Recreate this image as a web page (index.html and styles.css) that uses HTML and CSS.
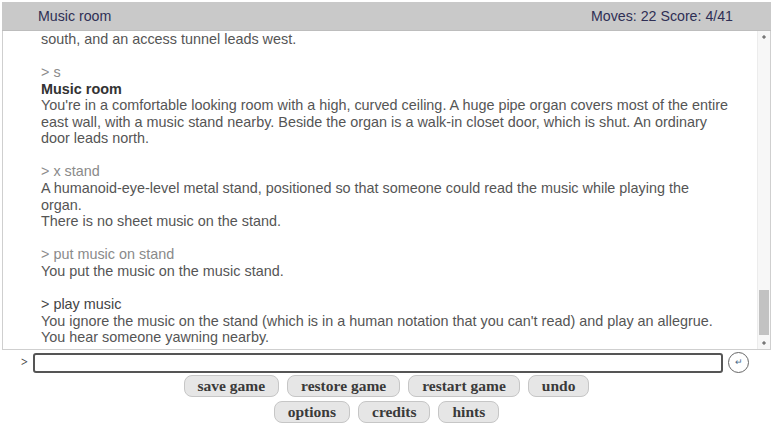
FILE: index.html
```html
<!DOCTYPE html>
<html lang="en">
<head>
    <meta charset="UTF-8">
    <title>Music room</title>
    <link rel="stylesheet" href="styles.css">
</head>
<body>
    <div class="status">
        <span class="location">Music room</span>
        <span class="score">Moves: 22 Score: 4/41</span>
    </div>

    <div class="output">
        <div class="viewport">
            <div class="transcript">
                <p>south, and an access tunnel leads west.</p>
                <p class="cmd">&gt; s</p>
                <p><b>Music room</b><br>You're in a comfortable looking room with a high, curved ceiling. A huge pipe organ covers most of the entire east wall, with a music stand nearby. Beside the organ is a walk-in closet door, which is shut. An ordinary door leads north.</p>
                <p class="cmd">&gt; x stand</p>
                <p>A humanoid-eye-level metal stand, positioned so that someone could read the music while playing the organ.<br>There is no sheet music on the stand.</p>
                <p class="cmd">&gt; put music on stand</p>
                <p>You put the music on the music stand.</p>
                <p class="cmd last">&gt; play music</p>
                <p>You ignore the music on the stand (which is in a human notation that you can't read) and play an allegrue.<br>You hear someone yawning nearby.</p>
            </div>
        </div>
        <div class="scrollbar">
            <span class="arrow"></span>
            <div class="track"><span class="thumb"></span></div>
            <span class="arrow"></span>
        </div>
    </div>

    <div class="input-row">
        <span class="prompt">&gt;</span>
        <input type="text" class="command">
        <button class="enter">&#8629;</button>
    </div>

    <div class="buttons">
        <div class="row">
            <button class="btn">save game</button>
            <button class="btn">restore game</button>
            <button class="btn">restart game</button>
            <button class="btn">undo</button>
        </div>
        <div class="row">
            <button class="btn">options</button>
            <button class="btn">credits</button>
            <button class="btn">hints</button>
        </div>
    </div>
</body>
</html>
```

FILE: styles.css
```css
body {
    margin: 0;
    padding: 2px 2px 0;
    font-family: "Liberation Sans", Arial, sans-serif;
    font-size: 14.4px;
    background-color: #fff;
}
.status {
    display: flex;
    justify-content: space-between;
    align-items: center;
    height: 28px;
    padding: 0 38px 0 36px;
    background-color: #c9c9c9;
    border-bottom: 1px solid #bdbdbd;
    color: #2f2f55;
    font-size: 14.2px;
}
.output {
    display: flex;
    height: 318px;
    border: 1px solid #cfcfcf;
    border-top: none;
}
.viewport {
    flex: 1;
    overflow: hidden;
    display: flex;
    flex-direction: column-reverse;
}
.transcript {
    width: 687px;
    padding: 0 0 3px 38px;
    color: #555;
    line-height: 16.6px;
}
.transcript p {
    margin: 0 0 16.6px;
}
.transcript p:last-child {
    margin-bottom: 0;
}
.transcript b {
    color: #333;
}
.cmd {
    color: #8a8a8a;
}
.transcript p.cmd {
    margin-bottom: 0;
}
.cmd.last {
    color: #444;
}

/* scrollbar, pinned to the bottom of the transcript */
.scrollbar {
    display: flex;
    flex-direction: column;
    width: 12px;
    background-color: #f7f7f7;
    border-left: 1px solid #ececec;
}
.arrow {
    height: 12px;
    background-image: radial-gradient(circle, #777 0, #777 1.3px, transparent 2px);
}
.track {
    flex: 1;
    display: flex;
    flex-direction: column;
    justify-content: flex-end;
    padding: 0 1px 2px;
}
.thumb {
    height: 45px;
    background-color: #c2c2c2;
}

.input-row {
    display: flex;
    align-items: center;
    margin-top: 2px;
    padding-left: 19px;
}
.prompt {
    font-family: "Liberation Serif", serif;
    font-weight: bold;
    color: #444;
    font-size: 12px;
    width: 12px;
}
.command {
    flex: 1;
    height: 20px;
    box-sizing: border-box;
    border: 2px solid #555;
    border-radius: 3px;
    padding: 0 4px;
    margin: 0;
}
.enter {
    width: 21px;
    height: 21px;
    margin: 0 22px 0 5px;
    padding: 0;
    border: 1.5px solid #666;
    border-radius: 50%;
    background-color: #fff;
    font-size: 9px;
    line-height: 1;
    color: #4a6a8a;
}
.buttons {
    margin-top: 2px;
}
.row {
    display: flex;
    justify-content: center;
    gap: 8px;
    margin-bottom: 4px;
}
.btn {
    height: 22px;
    padding: 0 13px;
    font-family: "Liberation Serif", serif;
    font-weight: bold;
    font-size: 15.5px;
    color: #3a3a3a;
    background-color: #e6e6e6;
    border: 1px solid #c6c6c6;
    border-radius: 8px;
    cursor: pointer;
}
```
